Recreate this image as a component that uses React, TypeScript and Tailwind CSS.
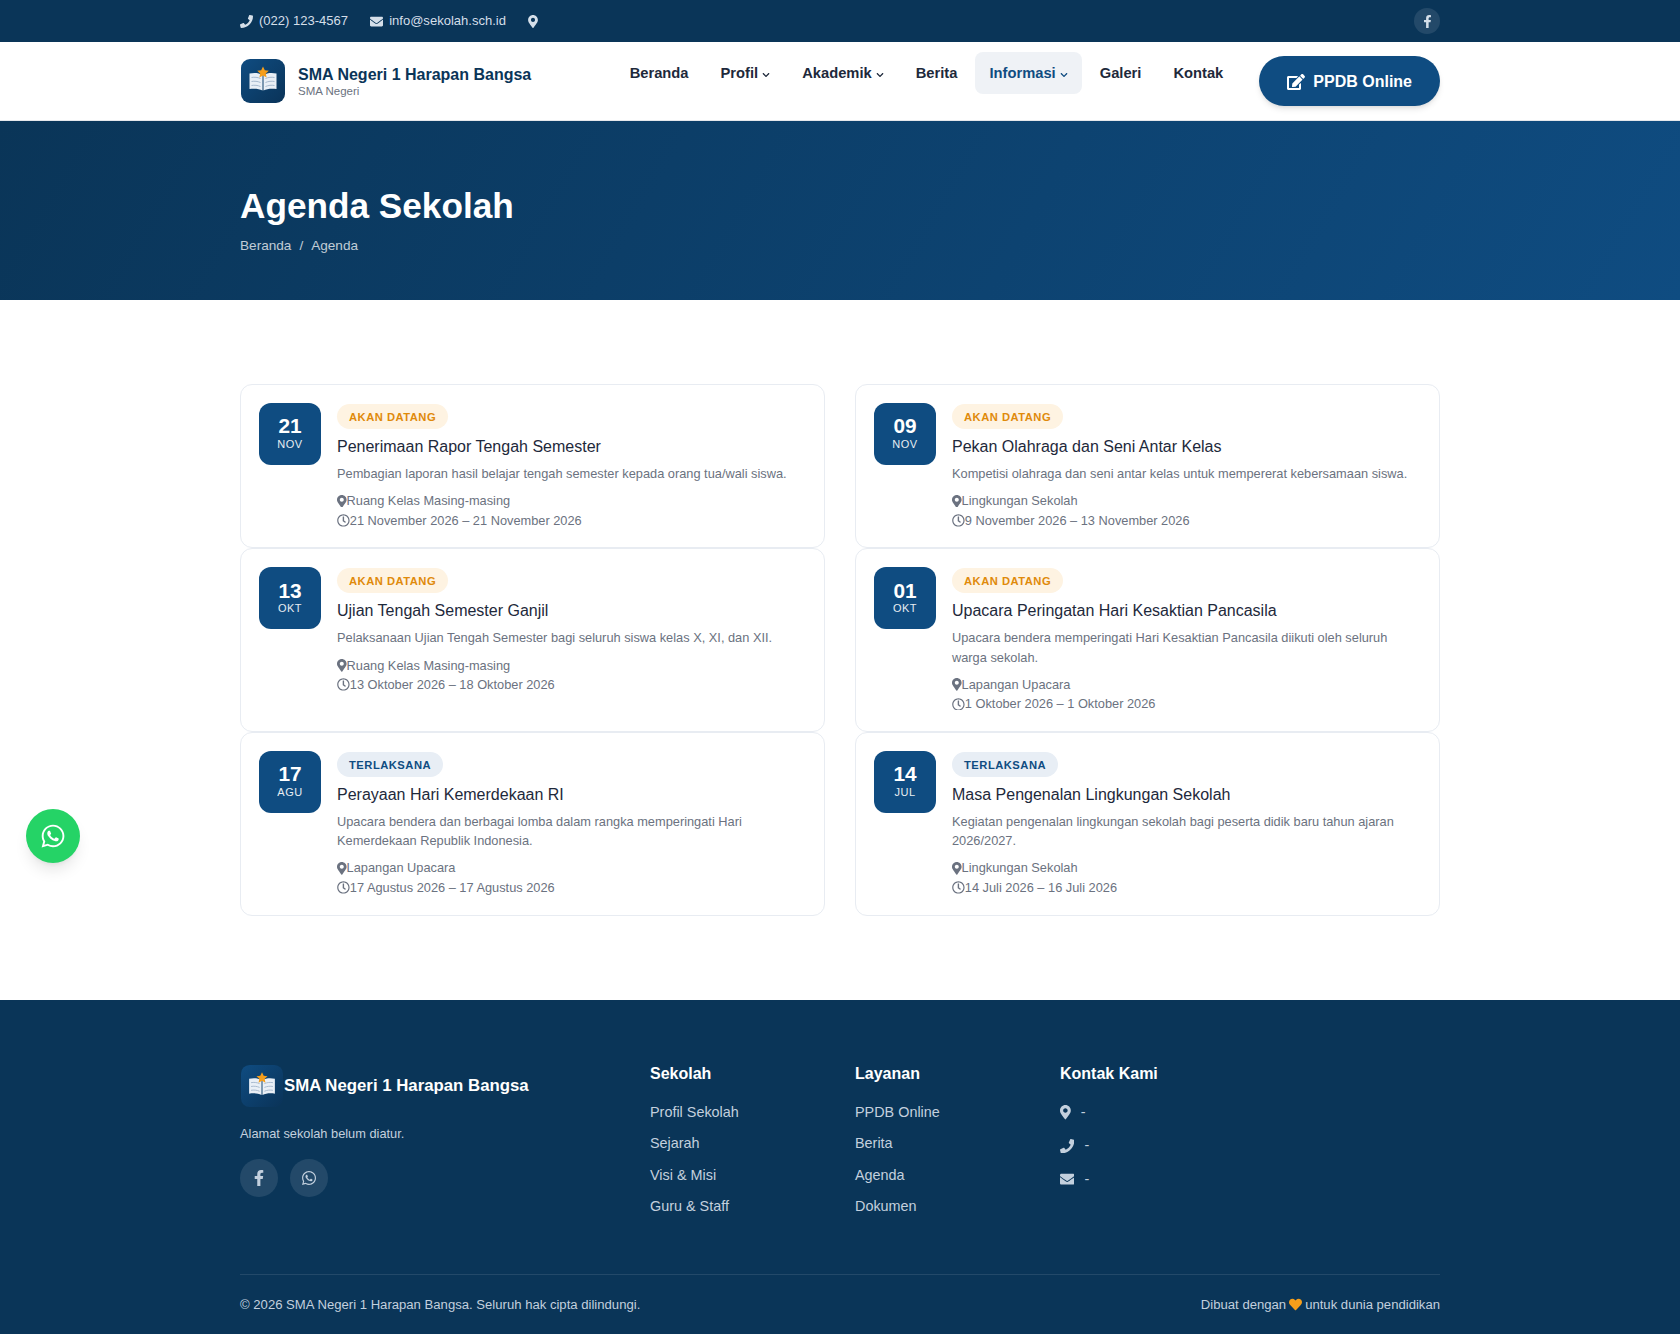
import { FaChevronDown, FaEdit, FaEnvelope, FaFacebookF, FaHeart, FaMapMarkerAlt, FaPhone, FaRegClock, FaWhatsapp } from 'react-icons/fa'

const agenda = [
  { day: '21', month: 'NOV', done: false, title: 'Penerimaan Rapor Tengah Semester', desc: 'Pembagian laporan hasil belajar tengah semester kepada orang tua/wali siswa.', place: 'Ruang Kelas Masing-masing', date: '21 November 2026 – 21 November 2026' },
  { day: '09', month: 'NOV', done: false, title: 'Pekan Olahraga dan Seni Antar Kelas', desc: 'Kompetisi olahraga dan seni antar kelas untuk mempererat kebersamaan siswa.', place: 'Lingkungan Sekolah', date: '9 November 2026 – 13 November 2026' },
  { day: '13', month: 'OKT', done: false, title: 'Ujian Tengah Semester Ganjil', desc: 'Pelaksanaan Ujian Tengah Semester bagi seluruh siswa kelas X, XI, dan XII.', place: 'Ruang Kelas Masing-masing', date: '13 Oktober 2026 – 18 Oktober 2026' },
  { day: '01', month: 'OKT', done: false, title: 'Upacara Peringatan Hari Kesaktian Pancasila', desc: 'Upacara bendera memperingati Hari Kesaktian Pancasila diikuti oleh seluruh warga sekolah.', place: 'Lapangan Upacara', date: '1 Oktober 2026 – 1 Oktober 2026' },
  { day: '17', month: 'AGU', done: true, title: 'Perayaan Hari Kemerdekaan RI', desc: 'Upacara bendera dan berbagai lomba dalam rangka memperingati Hari Kemerdekaan Republik Indonesia.', place: 'Lapangan Upacara', date: '17 Agustus 2026 – 17 Agustus 2026' },
  { day: '14', month: 'JUL', done: true, title: 'Masa Pengenalan Lingkungan Sekolah', desc: 'Kegiatan pengenalan lingkungan sekolah bagi peserta didik baru tahun ajaran 2026/2027.', place: 'Lingkungan Sekolah', date: '14 Juli 2026 – 16 Juli 2026' },
]

const navItems = [
  { label: 'Beranda' },
  { label: 'Profil', caret: true },
  { label: 'Akademik', caret: true },
  { label: 'Berita' },
  { label: 'Informasi', caret: true, active: true },
  { label: 'Galeri' },
  { label: 'Kontak' },
]

function Logo({ size }: { size: string }) {
  return (
    <svg viewBox="0 0 44 44" className={size}>
      <defs>
        <linearGradient id="logoBg" x1="0" y1="0" x2="1" y2="1">
          <stop offset="0" stopColor="#0f4c81" />
          <stop offset="1" stopColor="#0a3358" />
        </linearGradient>
      </defs>
      <rect width="44" height="44" rx="9" fill="url(#logoBg)" />
      <path d="M8.500 14.500c4.500-1 9.500-.8 13 1.500v15.500c-3.500-2-8.500-2.200-13-1.500z" fill="#e9eff6" />
      <path d="M35.500 14.500c-4.500-1-9.500-.8-13 1.500v15.500c3.500-2 8.500-2.200 13-1.500z" fill="#e9eff6" />
      <path d="M10.500 18.500c3-.5 6-.3 9 1M10.500 22.500c3-.5 6-.3 9 1M10.500 26.500c3-.5 6-.3 9 1M33.500 18.500c-3-.5-6-.3-9 1M33.500 22.500c-3-.5-6-.3-9 1M33.500 26.500c-3-.5-6-.3-9 1" stroke="#9fb3c9" strokeWidth=".9" fill="none" />
      <path d="M22 7.500l1.800 3.700 4 .5-3 2.800.8 4L22 16.500l-3.600 2 .8-4-3-2.800 4-.5z" fill="#f59e1b" />
    </svg>
  )
}

function AgendaCard({ item }: { item: (typeof agenda)[number] }) {
  return (
    <div className="flex gap-4 rounded-xl border border-[#e8ecf2] bg-white px-[18px] pt-[18px] pb-[17.200px]">
      <div className="flex h-[62px] w-[62px] shrink-0 flex-col items-center justify-center rounded-xl bg-[#0f4c81] text-white">
        <div className="text-[20.800px] leading-none font-bold">{item.day}</div>
        <div className="mt-[1px] text-[11px] leading-tight tracking-[0.5px] opacity-90">{item.month}</div>
      </div>
      <div className="min-w-0 flex-1">
        <div className="flex h-[27px] pt-[1px]">
          <span className={item.done
            ? 'flex h-[25px] items-center rounded-full bg-[#e8eef5] px-3 pt-[1px] text-[11.200px] font-bold tracking-[0.5px] text-[#0f4c81]'
            : 'flex h-[25px] items-center rounded-full bg-[#fef3e2] px-3 pt-[1px] text-[11.200px] font-bold tracking-[0.5px] text-[#e08a0b]'}>
            {item.done ? 'TERLAKSANA' : 'AKAN DATANG'}
          </span>
        </div>
        <h3 className="mt-[7px] text-[16px] leading-[20px] text-[#1e293b]">{item.title}</h3>
        <p className="mt-[7px] text-[12.800px] leading-[19.200px] text-[#6b7280]">{item.desc}</p>
        <div className="mt-2 flex items-center text-[12.800px] leading-[19.500px] text-[#6b7280]">
          <FaMapMarkerAlt className="h-[12.800px] w-[9.600px] shrink-0" />
          <span>{item.place}</span>
        </div>
        <div className="flex items-center text-[12.800px] leading-[19.500px] text-[#6b7280]">
          <FaRegClock className="h-[12.800px] w-[12.800px] shrink-0" />
          <span>{item.date}</span>
        </div>
      </div>
    </div>
  )
}

export default function App() {
  return (
    <div className="relative min-h-[1334px] bg-white font-['Liberation_Sans',Arial,sans-serif]">
      {/* Top bar */}
      <div className="bg-[#0a3558] text-[13.040px] text-[#d5dfe9]">
        <div className="mx-auto flex h-[42px] w-[1200px] items-center justify-between">
          <div className="flex items-center gap-[22px]">
            <div className="flex items-center gap-[6px]"><FaPhone className="h-[13px] w-[13px]" />(022) 123-4567</div>
            <div className="flex items-center gap-[6px]"><FaEnvelope className="h-[13px] w-[13px]" />info@sekolah.sch.id</div>
            <FaMapMarkerAlt className="h-[13px] w-[10px]" />
          </div>
          <div className="flex h-[26px] w-[26px] items-center justify-center rounded-full bg-white/10">
            <FaFacebookF size={13} />
          </div>
        </div>
      </div>

      {/* Navbar */}
      <div className="border-b border-[#e5e7eb] bg-white">
        <div className="mx-auto flex h-[78px] w-[1200px] items-center">
          <div className="ml-[1px] flex items-center gap-[13px]">
            <Logo size="h-11 w-11" />
            <div>
              <div className="text-[16px] leading-[20px] font-bold text-[#0a3558]">SMA Negeri 1 Harapan Bangsa</div>
              <div className="text-[11.500px] leading-[13px] text-[#6b7280]">SMA Negeri</div>
            </div>
          </div>
          <div className="ml-auto flex items-center gap-1 self-start pt-[10px]">
            {navItems.map((n) => (
              <div key={n.label} className={n.active
                ? 'flex h-[42px] items-center gap-[4px] rounded-lg bg-[#eff2f6] px-[14px] pt-[1px] text-[14.720px] font-bold text-[#0f4c81]'
                : 'flex h-[42px] items-center gap-[4px] rounded-lg px-[14px] pt-[1px] text-[14.720px] font-bold text-[#1e293b]'}>
                {n.label}
                {n.caret && <FaChevronDown size={8} className="mt-[2px]" />}
              </div>
            ))}
          </div>
          <div className="ml-[22px] flex h-[50px] items-center gap-2 rounded-full bg-[#0f4c81] px-7 pt-[1px] text-[16px] font-bold text-white shadow-md">
            <FaEdit size={18} />
            PPDB Online
          </div>
        </div>
      </div>

      {/* Hero */}
      <div className="h-[179px] bg-[linear-gradient(120deg,#0a3558,#0f4c81)]">
        <div className="mx-auto w-[1200px] pt-[64px]">
          <h1 className="text-[35.200px] leading-[42px] font-bold text-white">Agenda Sekolah</h1>
          <div className="mt-[9px] flex gap-2 text-[13.600px] leading-[20px] text-white/75">
            <span>Beranda</span><span>/</span><span>Agenda</span>
          </div>
        </div>
      </div>

      {/* Agenda list */}
      <div className="mx-auto grid w-[1200px] grid-cols-2 gap-x-[30px] pt-[84px] pb-[84px]">
        {agenda.map((item) => <AgendaCard key={item.day + item.month} item={item} />)}
      </div>

      {/* Footer */}
      <div className="bg-[#0a3558] text-[#c3d0de]">
        <div className="mx-auto w-[1200px] pt-[64px]">
          <div className="grid grid-cols-[410px_205px_205px_1fr] pb-[56px]">
            <div>
              <div className="mt-[1px] ml-[1px] flex items-center gap-[1px]">
                <Logo size="h-[42px] w-[42px]" />
                <span className="text-[16.800px] font-bold text-white">SMA Negeri 1 Harapan Bangsa</span>
              </div>
              <p className="mt-[17px] text-[12.800px] leading-[20px]">Alamat sekolah belum diatur.</p>
              <div className="mt-[15px] flex gap-3">
                <div className="flex h-[38px] w-[38px] items-center justify-center rounded-full bg-white/10"><FaFacebookF size={16} /></div>
                <div className="flex h-[38px] w-[38px] items-center justify-center rounded-full bg-white/10"><FaWhatsapp size={16} /></div>
              </div>
            </div>
            {[
              { title: 'Sekolah', links: ['Profil Sekolah', 'Sejarah', 'Visi & Misi', 'Guru & Staff'] },
              { title: 'Layanan', links: ['PPDB Online', 'Berita', 'Agenda', 'Dokumen'] },
            ].map((col) => (
              <div key={col.title}>
                <h4 className="text-[16px] leading-[20px] font-bold text-white">{col.title}</h4>
                <div className="mt-[18px] flex flex-col gap-[10px]">
                  {col.links.map((l) => <div key={l} className="text-[14.400px] leading-[21.600px]">{l}</div>)}
                </div>
              </div>
            ))}
            <div>
              <h4 className="text-[16px] leading-[20px] font-bold text-white">Kontak Kami</h4>
              <div className="mt-[18px] flex flex-col gap-[12px] text-[14.400px] leading-[21.600px]">
                <div className="flex items-center gap-[10px]"><FaMapMarkerAlt className="h-[14.400px] w-[10.800px]" />-</div>
                <div className="flex items-center gap-[10px]"><FaPhone className="h-[14.400px] w-[14.400px]" />-</div>
                <div className="flex items-center gap-[10px]"><FaEnvelope className="h-[14.400px] w-[14.400px]" />-</div>
              </div>
            </div>
          </div>
          <div className="flex h-[60px] items-center justify-between border-t border-white/10 text-[13.120px]">
            <span>© 2026 SMA Negeri 1 Harapan Bangsa. Seluruh hak cipta dilindungi.</span>
            <span className="flex items-center gap-[3px]">Dibuat dengan <FaHeart size={13} className="text-[#f59e1b]" /> untuk dunia pendidikan</span>
          </div>
        </div>
      </div>

      {/* Floating WhatsApp */}
      <div className="fixed top-[809px] left-[26px] flex h-[54px] w-[54px] items-center justify-center rounded-full bg-[#25d366] text-white shadow-lg">
        <FaWhatsapp size={26} />
      </div>
    </div>
  )
}
